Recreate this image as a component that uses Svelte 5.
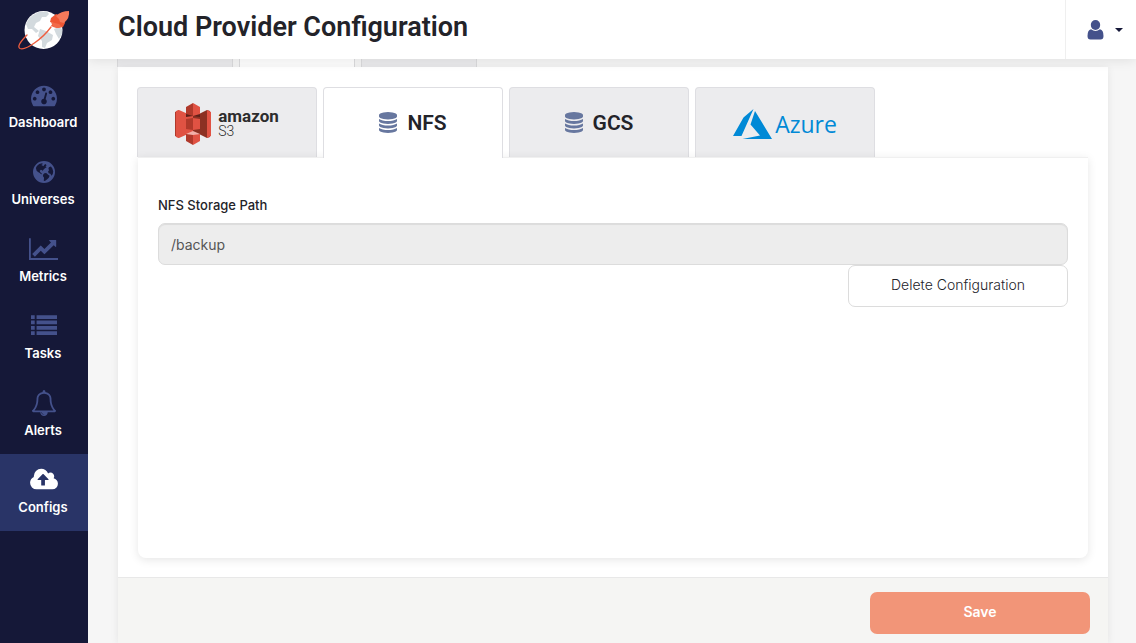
<script>
  const icons = {
    Dashboard: {
      box: '0 0 1792 1792',
      width: 26,
      d: 'M384 1152q0-53-37.5-90.5t-90.5-37.5-90.5 37.5-37.5 90.5 37.5 90.5 90.5 37.5 90.5-37.5 37.5-90.5zm192-448q0-53-37.5-90.5t-90.5-37.5-90.5 37.5-37.5 90.5 37.5 90.5 90.5 37.5 90.5-37.5 37.5-90.5zm428 481l101-382q6-26-7.5-48.5t-38.5-29.5-48 6.5-30 39.5l-101 382q-60 5-107 43.5t-63 98.5q-20 77 20 146t117 89 146-20 89-117q16-60-6-117t-72-91zm660-33q0-53-37.5-90.5t-90.5-37.5-90.5 37.5-37.5 90.5 37.5 90.5 90.5 37.5 90.5-37.5 37.5-90.5zm-640-640q0-53-37.5-90.5t-90.5-37.5-90.5 37.5-37.5 90.5 37.5 90.5 90.5 37.5 90.5-37.5 37.5-90.5zm448 192q0-53-37.5-90.5t-90.5-37.5-90.5 37.5-37.5 90.5 37.5 90.5 90.5 37.5 90.5-37.5 37.5-90.5zm320 448q0 261-141 483-19 29-54 29h-1402q-35 0-54-29-141-221-141-483 0-182 71-348t191-286 286-191 348-71 348 71 286 191 191 286 71 348z'
    },
    Universes: {
      box: '128 0 1536 1792',
      width: 22,
      d: 'M896 128a768 768 0 1 1 0 1536a768 768 0 0 1 0-1536zM560 340L400 480L330 620L380 800L480 900L600 960L700 1060L760 1040L680 940L620 900L600 800L680 740L780 770L800 850L840 760L960 640L1080 560L1000 500L1080 420L1000 340L900 400L860 500L780 440L700 400L820 330L760 280ZM960 960L850 1060L820 1180L900 1290L880 1500L960 1520L1120 1400L1230 1290L1290 1150L1180 1080L1080 980ZM1240 560L1200 680L1260 760L1180 860L1220 980L1340 1020L1420 1160L1510 1040L1540 860L1480 660L1380 520Z'
    },
    Metrics: {
      box: '0 0 2048 1792',
      width: 29,
      d: 'M2048 1536v128h-2048v-1536h128v1408h1920zm-128-1248v435q0 21-19.5 29.5t-35.5-7.5l-121-121-633 633q-10 10-23 10t-23-10l-233-233-416 416-192-192 585-585q10-10 23-10t23 10l233 233 464-464-121-121q-16-16-7.5-35.5t29.5-19.5h435q14 0 23 9t9 23z'
    },
    Tasks: {
      box: '0 0 1792 1792',
      width: 26,
      d: 'M0 150h256v256h-256zM384 150h1408v256h-1408zM0 520h256v256h-256zM384 520h1408v256h-1408zM0 890h256v256h-256zM384 890h1408v256h-1408zM0 1260h256v256h-256zM384 1260h1408v256h-1408z'
    },
    Alerts: {
      box: '0 0 1792 1792',
      width: 26,
      d: 'M912 1696q0-16-16-16-59 0-101.5-42.5t-42.5-101.5q0-16-16-16t-16 16q0 73 51.5 124.5t124.5 51.5q16 0 16-16zm-666-288h1300q-266-300-266-832 0-51-24-105t-69-103-121.5-80.5-169.5-31.5-169.5 31.5-121.5 80.5-69 103-24 105q0 532-266 832zm1482 0q0 52-38 90t-90 38h-448q0 106-75 181t-181 75-181-75-75-181h-448q-52 0-90-38t-38-90q50-42 91-88t85-119.5 74.5-158.5 50-206 19.5-260q0-152 117-282.5t307-158.5q-8-19-8-39 0-40 28-68t68-28 68 28 28 68q0 20-8 39 190 28 307 158.5t117 282.5q0 139 19.5 260t50 206 74.5 158.5 85 119.5 91 88z'
    },
    Configs: {
      box: '-64 0 1920 1792',
      width: 28,
      d: 'M1216 864q0-14-9-23l-352-352q-9-9-23-9t-23 9l-351 351q-10 12-10 24 0 14 9 23t23 9h224v352q0 13 9.5 22.5t22.5 9.5h192q13 0 22.5-9.5t9.5-22.5v-352h224q13 0 22.5-9.5t9.5-22.5zm640 288q0 159-112.5 271.5t-271.5 112.5h-1088q-185 0-316.5-131.5t-131.5-316.5q0-130 70-240t188-165q-2-30-2-43 0-212 150-362t362-150q156 0 285.5 87t188.5 231q71-62 166-62 106 0 181 75t75 181q0 76-41 138 130 31 213.5 135.5t83.5 238.5z'
    }
  };
  const nav = Object.entries(icons);
  let page = $state('Configs');
  let tab = $state('nfs');
  let path = $state('/backup');
</script>

{#snippet database()}
  <svg class="db" viewBox="0 0 1536 1792" aria-hidden="true"><path d="M768 768q237 0 443-43t325-127v170q0 69-103 128t-280 93.5-385 34.5-385-34.5-280-93.5-103-128v-170q119 84 325 127t443 43zm0 768q237 0 443-43t325-127v170q0 69-103 128t-280 93.5-385 34.5-385-34.5-280-93.5-103-128v-170q119 84 325 127t443 43zm0-384q237 0 443-43t325-127v170q0 69-103 128t-280 93.5-385 34.5-385-34.5-280-93.5-103-128v-170q119 84 325 127t443 43zm0-1152q208 0 385 34.5t280 93.5 103 128v128q0 69-103 128t-280 93.5-385 34.5-385-34.5-280-93.5-103-128v-128q0-69 103-128t280-93.5 385-34.5z" /></svg>
{/snippet}

<div class="app">
  <nav class="sidebar">
    <a class="logo" href="#home" aria-label="Home">
      <svg viewBox="0 0 52 42" width="52" height="42">
        <circle cx="25.500" cy="21" r="19" fill="#fff" />
        <path d="M11 9.500L15 6L21 3L29 2.500L31 5L28 8L24 8L22 12L18 14L16 18L21 22L18 24L14 20L10 20L8 15Z" fill="#d3dade" />
        <path d="M22 20L28 22L35 26L34 31L29 34L27 39L24 38L24 32L20 27Z" fill="#d3dade" />
        <path d="M36 20L41 18L44 20L44 25L41 30L38 25Z" fill="#d3dade" />
        <path d="M9 26C2 33-1 38 2 39.500C8 42 25 29 33 18" fill="none" stroke="#ef5d3e" stroke-width="1.300" stroke-linecap="round" />
        <path d="M33 9L38 5L44 7L47 14L45 18L39 19L36 18L33 17L35 14L32 13Z" fill="#ee5634" />
        <path d="M38 7Q43 2 51 2Q52 9 46 14L42 13L41 10Z" fill="#f5795a" />
        <path d="M33 13L41 15L44 18L40 19L35 18Z" fill="#f26a49" />
      </svg>
    </a>
    {#each nav as [name, icon]}
      <a class="item" class:active={page === name} href={'#' + name.toLowerCase()} onclick={() => (page = name)}>
        <svg viewBox={icon.box} width={icon.width} height="26" aria-hidden="true"><path d={icon.d} fill-rule={name === 'Universes' ? 'evenodd' : 'nonzero'} /></svg>
        <span>{name}</span>
      </a>
    {/each}
  </nav>

  <div class="content">
    <header>
      <h1>Cloud Provider Configuration</h1>
      <button class="user" aria-label="User menu">
        <svg viewBox="0 0 17 20" width="17" height="20" aria-hidden="true"><ellipse cx="8.500" cy="5" rx="4.700" ry="4.900" /><path d="M4 9.300Q8.500 12.800 13 9.300Q16.500 10 16.500 16Q16.500 19.500 13.500 19.500H3.500Q.5 19.500 .5 16Q.5 10 4 9.300Z" /></svg>
        <span class="caret"></span>
      </button>
    </header>

    <main>
      <div class="outer-tabs"><span></span><span class="on"></span><span></span></div>
      <section class="card">
        <div class="body">
          <div class="tabs" role="tablist">
            <button role="tab" class="s3" class:on={tab === 's3'} aria-selected={tab === 's3'} onclick={() => (tab = 's3')}>
              <svg viewBox="0 0 36 42" width="36" height="42" aria-hidden="true">
                <path d="M0 9L4 7V35L0 33Z" fill="#b0392b" />
                <path d="M1 8L4 7L13 11H18V31H13L4 35L1 34Z" fill="#e05243" />
                <path d="M35 8L32 7L24 11H18V31H24L32 35L35 34Z" fill="#8c3123" />
                <path d="M32 7L36 9V33L32 35Z" fill="#e05243" />
                <path d="M11 10L18 12L25 10V14L18 13L11 14Z" fill="#5e1f18" />
                <path d="M11 16L18 15V27L11 26Z" fill="#b0392b" />
                <path d="M25 16L18 15V27L25 26Z" fill="#e05243" />
                <path d="M11 4L18 0V13L11 11Z" fill="#b0392b" />
                <path d="M18 0L25 4V11L18 13Z" fill="#e05243" />
                <path d="M11 31L18 28L25 31L18 33Z" fill="#f2b0a9" />
                <path d="M11 31L18 32V42L11 38Z" fill="#b0392b" />
                <path d="M25 31L18 32V42L25 38Z" fill="#e05243" />
              </svg>
              <span class="amazon"><b>amazon</b><span>S3</span></span>
            </button>
            <button role="tab" class:on={tab === 'nfs'} aria-selected={tab === 'nfs'} onclick={() => (tab = 'nfs')}>{@render database()}NFS</button>
            <button role="tab" class:on={tab === 'gcs'} aria-selected={tab === 'gcs'} onclick={() => (tab = 'gcs')}>{@render database()}GCS</button>
            <button role="tab" class="azure" class:on={tab === 'azure'} aria-selected={tab === 'azure'} onclick={() => (tab = 'azure')}>
              <svg viewBox="0 0 39 30" width="39" height="30" aria-hidden="true"><path d="M20.500 0L10.500 8.500L0 27H8.500ZM22 2L17.500 15.500L27 26.500L9.500 30H39Z" fill="#0089d6" /></svg>
              <span>Azure</span>
            </button>
          </div>
          <div class="panel" role="tabpanel">
            <label for="nfs-path">NFS Storage Path</label>
            <input id="nfs-path" type="text" bind:value={path} disabled />
            <button class="delete" type="button">Delete Configuration</button>
          </div>
        </div>
        <footer><button class="save" type="button">Save</button></footer>
      </section>
    </main>
  </div>
</div>

<style>
  :global(body) { margin: 0; }
  .app, .app * { box-sizing: border-box; }
  .app {
    display: flex;
    min-height: 100vh;
    background: #f6f6f6;
    color: #232329;
    font-family: Inter, sans-serif;
    font-size: 14px;
  }
  button { font: inherit; color: inherit; margin: 0; cursor: pointer; }
  .sidebar { flex: 0 0 88px; background: #151838; }
  .logo { display: flex; justify-content: center; height: 69px; padding-top: 9px; }
  .item {
    display: flex;
    flex-direction: column;
    align-items: center;
    height: 77px;
    padding: 13px 2px 0 0;
    color: #fff;
    font-size: 13px;
    font-weight: 600;
    line-height: 20px;
    text-decoration: none;
  }
  .item svg { fill: #44518b; margin: 0 0 4px 1px; }
  .item.active { background: #293467; }
  .item.active svg { fill: #fff; }

  .content { flex: 1; min-width: 0; display: flex; flex-direction: column; }
  header {
    display: flex;
    justify-content: space-between;
    height: 59px;
    padding-left: 30px;
    background: #fff;
    box-shadow: 0 1px 12px rgba(0, 0, 0, 0.1);
    position: relative;
    clip-path: inset(0 0 -20px 0);
  }
  h1 { margin: 0; font: 600 27px/55px Roboto, sans-serif; }
  .user {
    display: flex;
    align-items: center;
    gap: 11px;
    padding: 0 13px 0 21px;
    border: 0;
    border-left: 1px solid #efefef;
    background: none;
  }
  .user svg { fill: #44518b; }
  .caret { border: 4px solid transparent; border-top-color: #151838; border-bottom: 0; }

  main { flex: 1; display: flex; flex-direction: column; padding: 0 28px 0 30px; }
  .outer-tabs { display: flex; gap: 6px; height: 8px; margin-left: -1px; }
  .outer-tabs span { width: 116px; background: #ececee; border: solid #dcdcde; border-width: 0 1px; }
  .outer-tabs .on { background: #fff; }
  .card {
    flex: 1;
    display: flex;
    flex-direction: column;
    background: #fff;
    box-shadow: 0 1px 8px rgba(0, 0, 0, 0.08);
  }
  .body { flex: 1; display: flex; flex-direction: column; padding: 20px 20px 19px; }
  .tabs { display: flex; gap: 6px; margin-left: -1px; }
  .tabs button {
    display: flex;
    align-items: center;
    justify-content: center;
    gap: 10px;
    width: 180px;
    height: 70px;
    padding: 0;
    background: #ececee;
    border: 1px solid #dedee2;
    border-bottom: 0;
    border-radius: 4px 4px 0 0;
    font: 600 21px/28px Roboto, sans-serif;
  }
  .tabs .on { background: #fff; height: 71px; margin-bottom: -1px; padding-bottom: 1px; position: relative; }
  .db { width: 18px; height: 21px; fill: #67779f; }
  .amazon {
    display: flex;
    flex-direction: column;
    align-items: flex-start;
    color: #2d2d2d;
    font: 17px/15px Roboto, sans-serif;
  }
  .tabs .s3 { gap: 7px; padding-top: 3px; }
  .amazon > span { font-size: 14px; font-weight: 300; }
  .tabs .azure {
    gap: 3px;
    padding-top: 2px;
    color: #0089d6;
    font: 23px/32px "Open Sans", sans-serif;
  }
  .panel {
    flex: 1;
    display: flex;
    flex-direction: column;
    padding: 37px 20px 20px;
    border-top: 1px solid #f0f0f0;
    border-radius: 0 0 8px 8px;
    box-shadow: 0 2px 10px rgba(0, 0, 0, 0.1);
  }
  label { font-size: 13px; font-weight: 500; line-height: 20px; margin-bottom: 8px; }
  input {
    width: 100%;
    height: 42px;
    padding: 0 12px;
    border: 1px solid #dcdcdc;
    border-radius: 7px;
    background: #ededed;
    box-shadow: inset 0 1px 1px rgba(0, 0, 0, 0.075);
    color: #555;
    font: 14px Inter, sans-serif;
  }
  .delete,
  .save {
    width: 220px;
    height: 42px;
    padding: 0 0 3px;
    border-radius: 7px;
  }
  .delete {
    align-self: flex-end;
    border: 1px solid #dcdcdc;
    background: #fff;
    font-weight: 300;
  }
  footer {
    display: flex;
    justify-content: flex-end;
    padding: 14px 18px 9px;
    border-top: 1px solid #e8e8e8;
    background: #f5f5f3;
  }
  .save {
    border: 0;
    background: #f29578;
    color: #fff;
    font-weight: 600;
  }
</style>
